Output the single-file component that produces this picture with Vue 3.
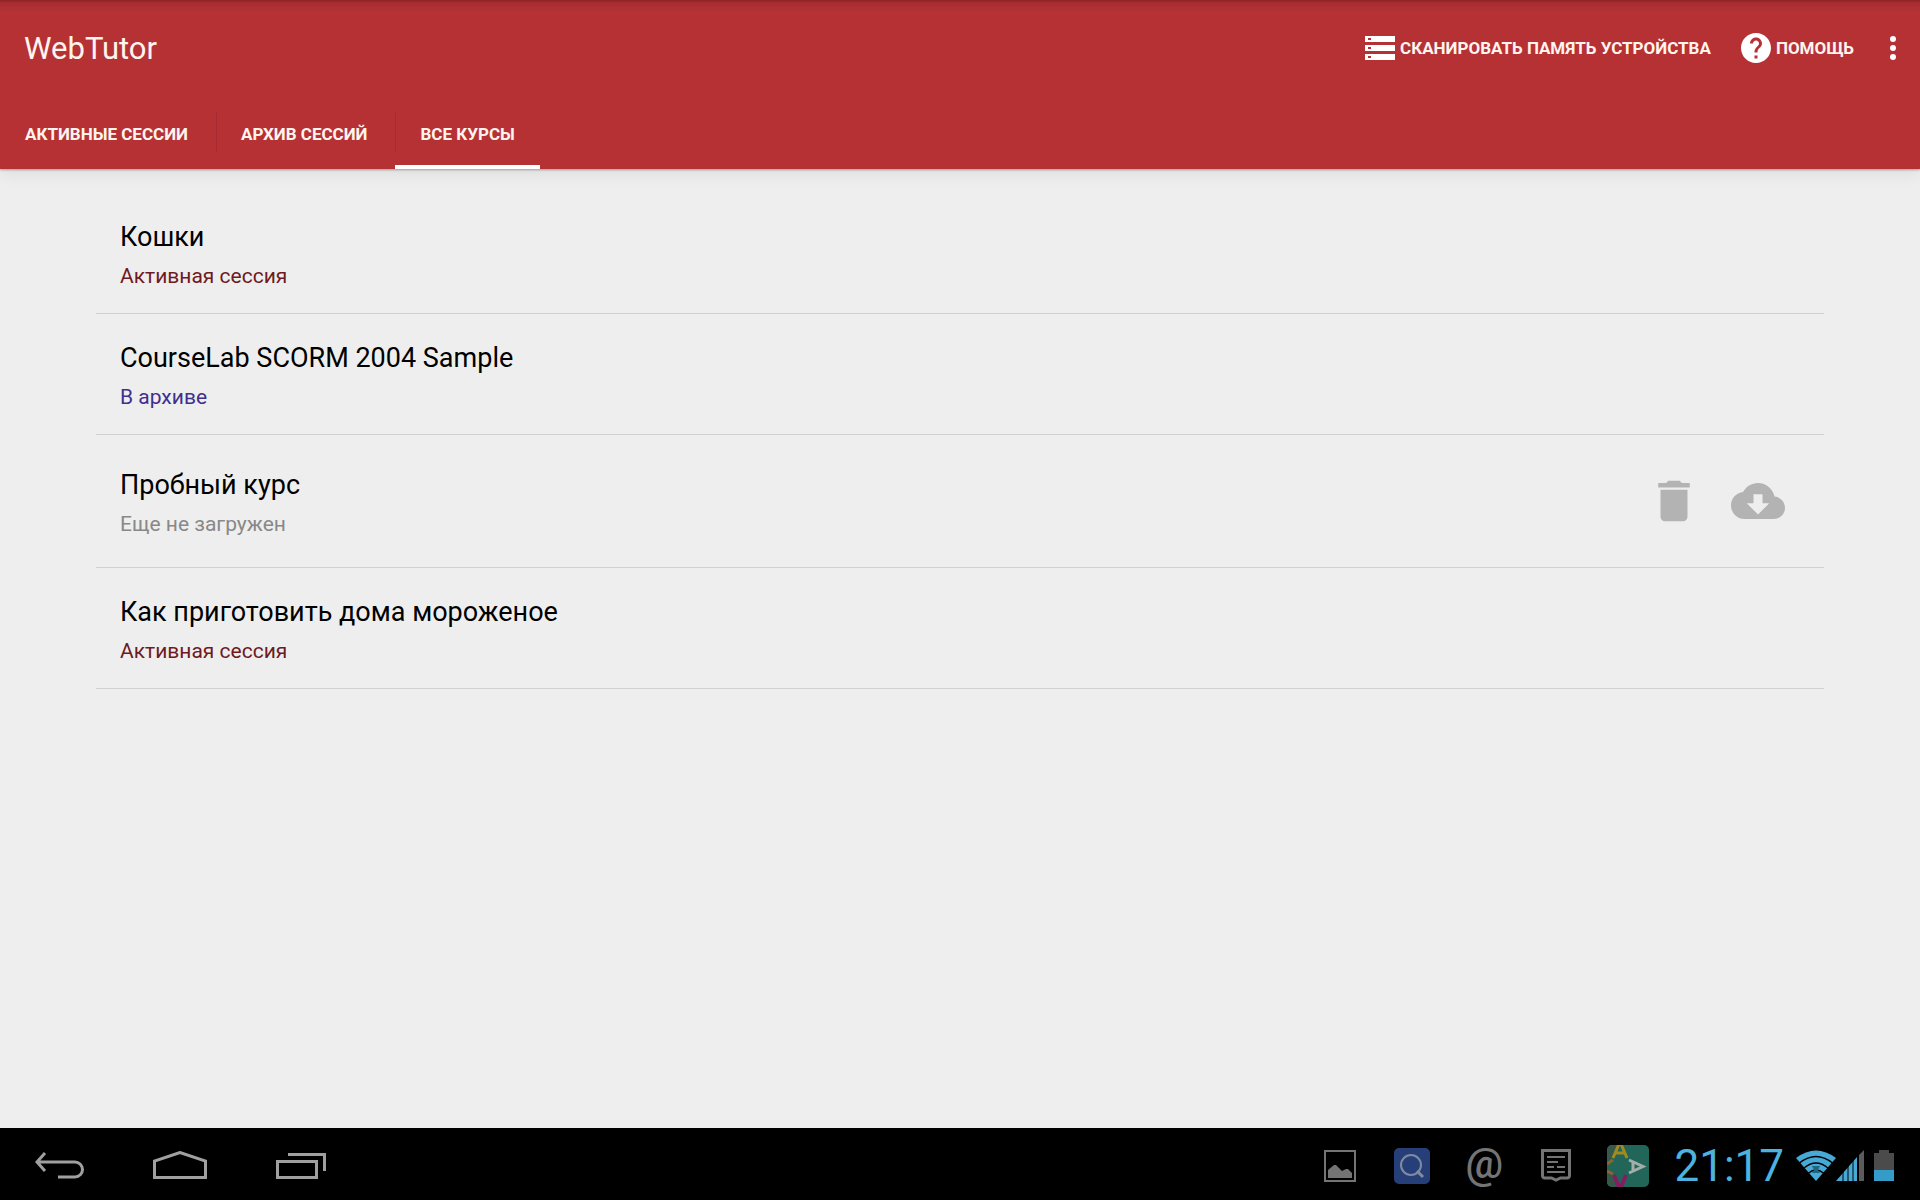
<template>
  <div class="screen">
    <header class="header">
      <div class="toolbar">
        <h1 class="app-title">WebTutor</h1>
        <div class="toolbar-actions">
          <button class="action" type="button">
            <svg width="30" height="24" viewBox="0 0 30 24" aria-hidden="true">
              <path fill="#fff" fill-rule="evenodd" d="M0 0h30v6H0zM3 2v2h3V2zM0 9h30v6H0zM3 11v2h3v-2zM0 18h30v6H0zM3 20v2h3v-2z" />
            </svg>
            <span>СКАНИРОВАТЬ ПАМЯТЬ УСТРОЙСТВА</span>
          </button>
          <button class="action" type="button">
            <svg width="30" height="30" viewBox="2 2 20 20" aria-hidden="true">
              <path fill="#fff" d="M12 2C6.48 2 2 6.48 2 12s4.48 10 10 10 10-4.48 10-10S17.52 2 12 2zm1 17h-2v-2h2v2zm2.07-7.75l-.9.92C13.45 12.9 13 13.5 13 15h-2v-.5c0-1.1.45-2.1 1.17-2.83l1.24-1.26c.37-.36.59-.86.59-1.41 0-1.1-.9-2-2-2s-2 .9-2 2H8c0-2.21 1.79-4 4-4s4 1.79 4 4c0 .88-.36 1.68-.93 2.25z" />
            </svg>
            <span>ПОМОЩЬ</span>
          </button>
          <button class="action more" type="button" aria-label="Ещё">
            <svg width="6" height="24" viewBox="0 0 6 24" fill="#fff" aria-hidden="true">
              <circle cx="3" cy="3" r="3" />
              <circle cx="3" cy="12" r="3" />
              <circle cx="3" cy="21" r="3" />
            </svg>
          </button>
        </div>
      </div>
      <nav class="tabs">
        <button
          v-for="tab in tabs"
          :key="tab.id"
          type="button"
          class="tab"
          :class="{ active: tab.id === activeTab }"
          @click="activeTab = tab.id"
        >{{ tab.label }}</button>
      </nav>
    </header>

    <main class="content">
      <ul class="courses">
        <li v-for="course in courses" :key="course.id" class="course" :class="{ tall: course.status === 'new' }">
          <div class="course-info">
            <h2 class="course-title">{{ course.title }}</h2>
            <p class="course-status" :class="course.status">{{ statusLabels[course.status] }}</p>
          </div>
          <div v-if="course.status === 'new'" class="course-actions">
            <button type="button" aria-label="Удалить">
              <svg width="54" height="54" viewBox="0 0 24 24" aria-hidden="true">
                <path fill="#b3b3b3" d="M6 19c0 1.1.9 2 2 2h8c1.1 0 2-.9 2-2V7H6v12zM19 4h-3.5l-1-1h-5l-1 1H5v2h14V4z" />
              </svg>
            </button>
            <button type="button" aria-label="Загрузить">
              <svg width="54" height="54" viewBox="0 0 24 24" aria-hidden="true">
                <path fill="#b3b3b3" d="M19.35 10.04C18.67 6.59 15.64 4 12 4 9.11 4 6.6 5.64 5.35 8.04 2.34 8.36 0 10.91 0 14c0 3.31 2.69 6 6 6h13c2.76 0 5-2.24 5-5 0-2.64-2.05-4.78-4.65-4.96zM17 13l-5 5-5-5h3V9h4v4h3z" />
              </svg>
            </button>
          </div>
        </li>
      </ul>
    </main>

    <footer class="system-bar">
      <div class="nav-keys">
        <button type="button" aria-label="Назад">
          <svg width="50" height="30" viewBox="0 0 50 30" fill="none" stroke="#a0a0a0" stroke-width="3" aria-hidden="true">
            <path d="M10 2L2 11l8 9M2 11h38a7.500 7.500 0 0 1 0 15H23" />
          </svg>
        </button>
        <button type="button" aria-label="Домой">
          <svg width="54" height="30" viewBox="0 0 54 30" fill="none" stroke="#a0a0a0" stroke-width="3" aria-hidden="true">
            <path d="M1.500 26.500V10L27 1.500 52.500 10v16.500z" />
          </svg>
        </button>
        <button type="button" aria-label="Недавние приложения">
          <svg width="52" height="30" viewBox="0 0 52 30" fill="none" stroke="#a0a0a0" stroke-width="3" aria-hidden="true">
            <path d="M3.500 10.500h39v16h-39zM14 3.500h36.500V20" />
          </svg>
        </button>
      </div>

      <div class="notifications">
        <span class="notice">
          <svg width="32" height="32" viewBox="0 0 32 32" aria-hidden="true">
            <path fill="none" stroke="#747474" stroke-width="2" d="M1 1h30v30H1z" />
            <path fill="#747474" d="M4 28v-8l6-5h2l6 6 4-2h2l4 4v5z" />
          </svg>
        </span>
        <span class="notice">
          <svg width="36" height="36" viewBox="0 0 36 36" aria-hidden="true">
            <rect width="36" height="36" rx="5" fill="#263f78" />
            <circle cx="17" cy="17" r="10" fill="none" stroke="#7f8b9f" stroke-width="2" />
            <path d="M23 23l6 6" stroke="#7f8b9f" stroke-width="3" />
          </svg>
        </span>
        <span class="notice at">@</span>
        <span class="notice">
          <svg width="30" height="34" viewBox="0 0 30 34" fill="none" stroke="#747474" aria-hidden="true">
            <path stroke-width="3" d="M1.500 1.500h27v25q0 2-2 2.500h-7L15 31l-4.500-2h-7q-2-.5-2-2.500z" />
            <path stroke-width="2" d="M6 8h18M6 13h11M6 18h7M16 18h8M6 23h18" />
          </svg>
        </span>
        <span class="notice">
          <svg width="42" height="42" viewBox="0 0 42 42" fill="none" aria-hidden="true">
            <clipPath id="app-tile"><rect width="42" height="42" rx="5" /></clipPath>
            <g clip-path="url(#app-tile)">
              <rect width="42" height="42" fill="#216659" />
              <path d="M0 0h12L8 11 0 16zM0 27l8 4 3 11H0z" fill="#36594a" />
              <path d="M6 13L12 -1h2L20 13M9 8h8" stroke="#a28a21" stroke-width="3" />
              <path d="M0 19l6-4M0 26l6 3" stroke="#8c6331" stroke-width="3" />
              <path d="M7 30l5 12h2l5-12" stroke="#831f60" stroke-width="4" />
              <path d="M22 15l14 6.500L22 28M26 17v9" stroke="#a3aeaa" stroke-width="3" />
            </g>
          </svg>
        </span>
      </div>

      <time class="clock">21:17</time>

      <div class="indicators">
        <svg width="40" height="32" viewBox="0 0 40 32" aria-hidden="true">
          <path fill="#46a9d6" d="M0 8Q20-7 40 8L20 31z" />
          <path fill="none" stroke="#000" stroke-width="1.500" d="M3.500 13Q20 0 36.500 13M8 18Q20 8 32 18M12.500 23Q20 17 27.500 23" />
          <path fill="#1f6685" d="M16 16h8l-2 4 2 3h-8l2-3z" />
        </svg>
        <svg width="28" height="32" viewBox="0 0 28 32" aria-hidden="true">
          <path fill="#46a9d6" d="M0 31L21 7v24z" />
          <path fill="#5b5b5b" d="M23 5l5-5v31h-5z" />
          <path stroke="#000" stroke-width="1" d="M7 21v10M12 15v16M17 10v21" />
        </svg>
        <svg class="battery" width="20" height="32" viewBox="0 0 20 32" aria-hidden="true">
          <path fill="#4b4b4b" d="M0 3h5V0h10v3h5v18H0z" />
          <path fill="#359bc9" d="M0 20h20v11H0z" />
        </svg>
      </div>
    </footer>
  </div>
</template>

<script setup>
import { ref } from 'vue'

const activeTab = ref('all')

const tabs = [
  { id: 'active', label: 'АКТИВНЫЕ СЕССИИ' },
  { id: 'archive', label: 'АРХИВ СЕССИЙ' },
  { id: 'all', label: 'ВСЕ КУРСЫ' }
]

const statusLabels = {
  active: 'Активная сессия',
  archived: 'В архиве',
  new: 'Еще не загружен'
}

const courses = ref([
  { id: 1, title: 'Кошки', status: 'active' },
  { id: 2, title: 'CourseLab SCORM 2004 Sample', status: 'archived' },
  { id: 3, title: 'Пробный курс', status: 'new' },
  { id: 4, title: 'Как приготовить дома мороженое', status: 'active' }
])
</script>

<style>
body { margin: 0; }
</style>

<style scoped>
.screen {
  display: flex;
  flex-direction: column;
  min-height: 100vh;
  background: #eee;
  font-family: Roboto, "Noto Sans", sans-serif;
}
button {
  padding: 0;
  border: 0;
  background: none;
  color: inherit;
  font: inherit;
  cursor: pointer;
}
svg { display: block; }

/* Header */
.header {
  background: linear-gradient(#8c2226, #a82d31 3px, #b63134 12px, #b63134);
  color: #fff4ee;
  box-shadow: 0 1px 2px rgba(0, 0, 0, 0.3), 0 4px 16px rgba(0, 0, 0, 0.08);
}
.toolbar {
  display: flex;
  justify-content: space-between;
  align-items: center;
  height: 96px;
  padding: 0 24px;
}
.app-title {
  margin: 0;
  font-size: 31px;
  font-weight: 400;
}
.toolbar-actions {
  display: flex;
  align-items: center;
  gap: 30px;
}
.action {
  display: flex;
  align-items: center;
  gap: 5px;
  font-size: 17px;
  font-weight: 700;
}
.more { margin-left: 6px; }
.tabs {
  display: flex;
  height: 73px;
}
.tab {
  padding: 6px 25px 0;
  border-bottom: 4px solid transparent;
  font-size: 17px;
  font-weight: 700;
}
.tab + .tab {
  margin-left: 3px;
  background: linear-gradient(#a62c31, #a62c31) left 16px / 1px 40px no-repeat;
}
.tab.active { border-bottom-color: #fff; }

/* Course list */
.content {
  flex: 1;
  padding: 24px 96px 0;
}
.courses {
  margin: 0;
  padding: 0;
  list-style: none;
}
.course {
  display: flex;
  justify-content: space-between;
  align-items: center;
  padding: 24px;
  border-bottom: 1px solid #d0d0d0;
}
.course.tall {
  padding-top: 30px;
  padding-bottom: 30px;
}
.course-title {
  margin: 0 0 6px;
  color: #000;
  font-size: 27px;
  font-weight: 400;
  line-height: 40px;
}
.course-status {
  margin: 0;
  font-size: 21px;
  line-height: 26px;
}
.course-status.active { color: #6f1a1e; }
.course-status.archived { color: #3f2f8f; }
.course-status.new { color: #888; }
.course-actions {
  display: flex;
  gap: 30px;
  padding-right: 15px;
}

/* System bar */
.system-bar {
  display: flex;
  align-items: center;
  box-sizing: border-box;
  height: 72px;
  padding: 3px 26px 0 0;
  background: #000;
}
.nav-keys {
  display: flex;
  margin-right: auto;
}
.nav-keys button {
  display: flex;
  justify-content: center;
  align-items: center;
  width: 120px;
  height: 66px;
}
.notifications { display: flex; }
.notice {
  display: flex;
  justify-content: center;
  align-items: center;
  width: 72px;
}
.notice.at {
  color: #747474;
  font-size: 42px;
  font-weight: 500;
  line-height: 36px;
  padding-bottom: 4px;
}
.clock {
  margin: 0 12px 0 10px;
  color: #4cb2e0;
  font-size: 44px;
  line-height: 66px;
}
.indicators {
  display: flex;
  align-items: center;
}
.battery { margin-left: 10px; }
</style>
